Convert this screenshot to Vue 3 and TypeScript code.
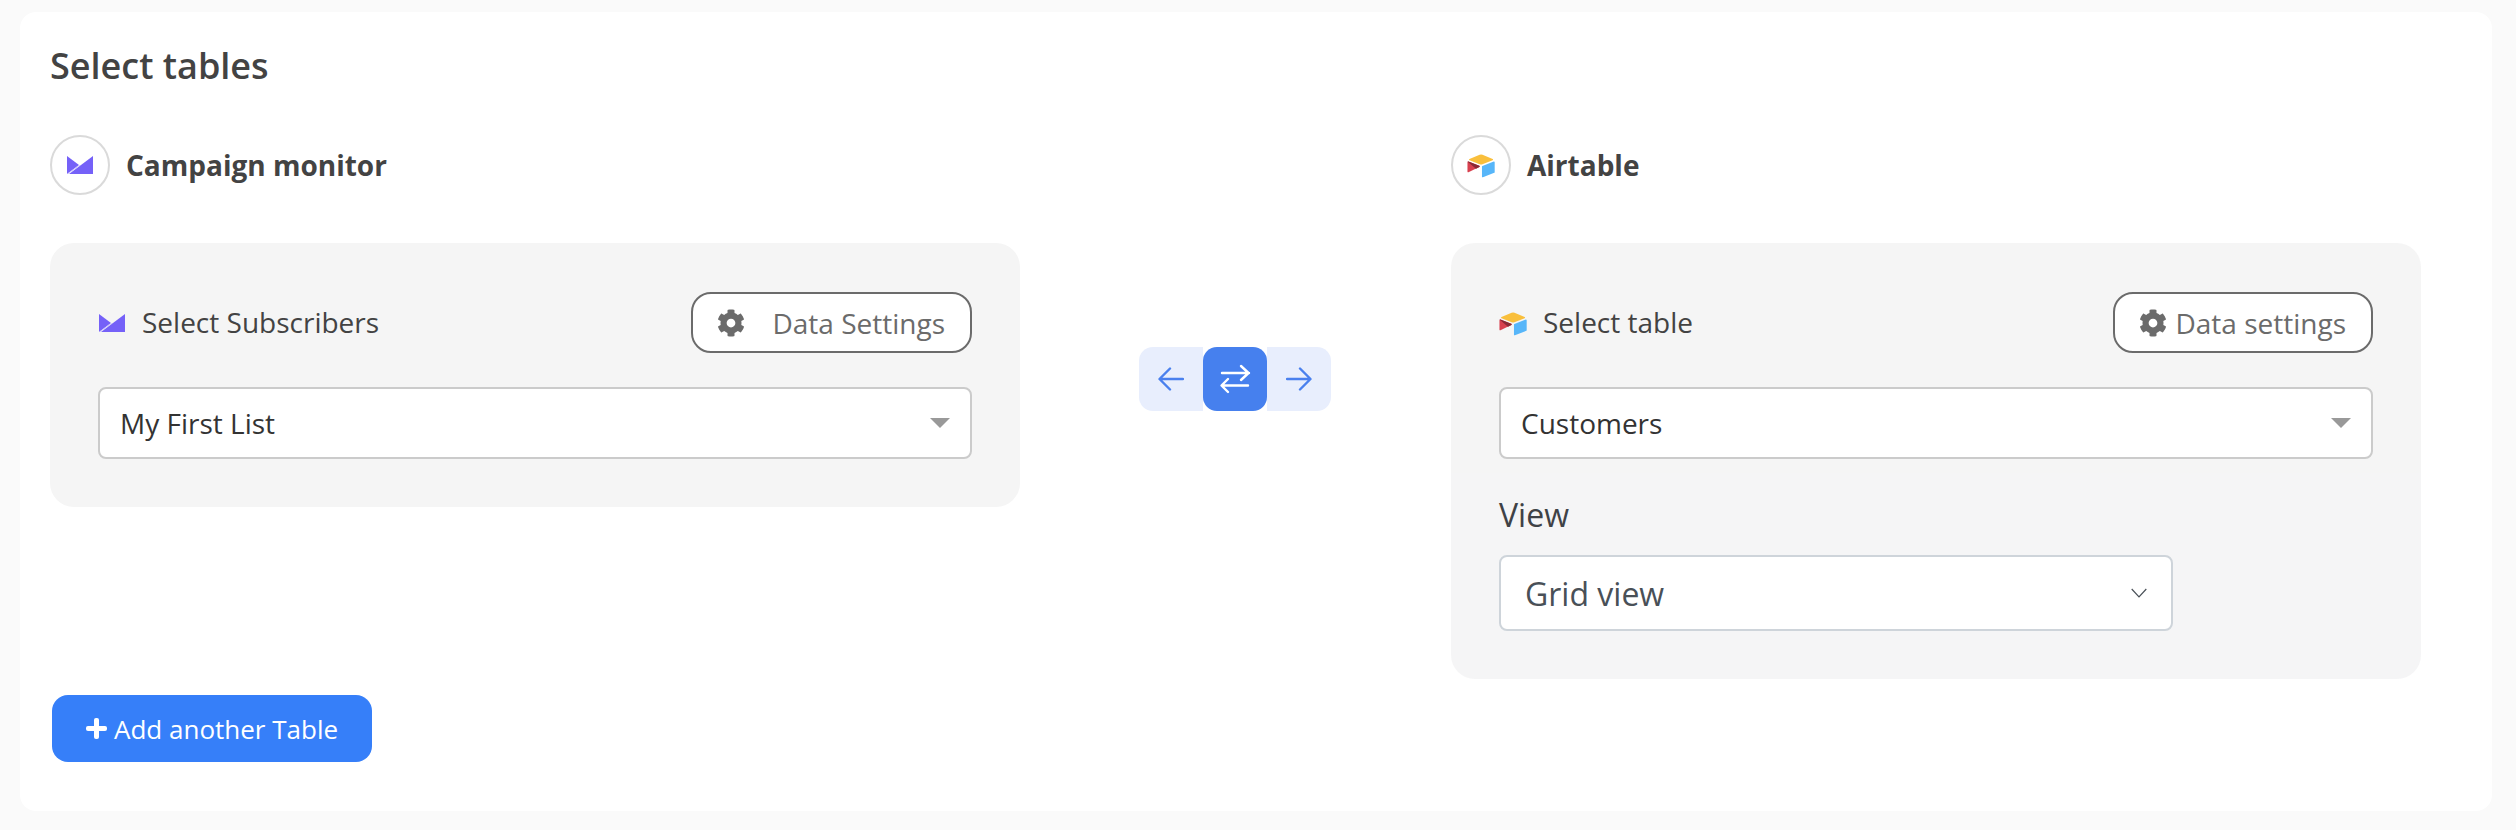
<script setup lang="ts">
const gear = "M487.4 315.7l-42.6-24.6c4.3-23.2 4.3-47 0-70.2l42.6-24.6c4.9-2.8 7.1-8.6 5.5-14-11.1-35.6-30-67.8-54.7-94.6-3.8-4.1-10-5.1-14.8-2.3L380.8 110c-17.9-15.4-38.5-27.3-60.8-35.1V25.8c0-5.6-3.9-10.5-9.4-11.7-36.7-8.2-74.3-7.8-109.2 0-5.5 1.2-9.4 6.1-9.4 11.7V75c-22.2 7.9-42.8 19.8-60.8 35.1L88.7 85.5c-4.9-2.8-11-1.9-14.8 2.3-24.7 26.7-43.6 58.9-54.7 94.6-1.7 5.4.6 11.2 5.5 14L67.3 221c-4.3 23.2-4.3 47 0 70.2l-42.6 24.6c-4.9 2.8-7.1 8.6-5.5 14 11.1 35.6 30 67.8 54.7 94.6 3.8 4.1 10 5.1 14.8 2.3l42.6-24.6c17.9 15.4 38.5 27.3 60.8 35.1v49.2c0 5.6 3.9 10.5 9.4 11.7 36.7 8.2 74.3 7.8 109.2 0 5.5-1.2 9.4-6.1 9.4-11.7v-49.2c22.2-7.9 42.8-19.8 60.8-35.1l42.6 24.6c4.9 2.8 11 1.9 14.8-2.3 24.7-26.7 43.6-58.9 54.7-94.6 1.5-5.5-.7-11.3-5.6-14.1zM256 336c-44.1 0-80-35.9-80-80s35.9-80 80-80 80 35.9 80 80-35.9 80-80 80z";
</script>

<template>
  <div class="page">
    <section class="card">
      <h1 class="title">Select tables</h1>
      <div class="columns">
        <div class="col">
          <div class="app-head">
            <span class="circle">
              <svg class="cm" viewBox="0 0 26 18"><path d="M0 0 12 9 0 18Z" fill="#7561f8" /><path d="M26 0V18H2L15 8.200Z" fill="#7561f8" /><path d="M0 18 12 9l1 .6L1 18Z" fill="#c9c0fc" /></svg>
            </span>
            <span class="app-name">Campaign monitor</span>
          </div>
          <div class="panel">
            <div class="row">
              <div class="label">
                <svg class="cm cm-small" viewBox="0 0 26 18"><path d="M0 0 12 9 0 18Z" fill="#7561f8" /><path d="M26 0V18H2L15 8.200Z" fill="#7561f8" /><path d="M0 18 12 9l1 .6L1 18Z" fill="#c9c0fc" /></svg>
                <span>Select Subscribers</span>
              </div>
              <button class="outline wide">
                <svg class="gear" viewBox="0 0 512 512"><path :d="gear" fill="#6b6b6b" /></svg>
                <span>Data Settings</span>
              </button>
            </div>
            <div class="select">
              <span>My First List</span>
              <i class="caret"></i>
            </div>
          </div>
        </div>

        <div class="middle">
          <div class="switch">
            <span class="seg">
              <svg viewBox="0 0 26 26" width="26" height="26"><path d="M25 13H2M12 2.500 1.500 13 12 23.500" fill="none" stroke="#4a80ee" stroke-width="2.400" stroke-linecap="round" stroke-linejoin="round" /></svg>
            </span>
            <span class="seg active">
              <svg viewBox="0 0 32 32" width="32" height="32"><path d="M3 10H30M22 3l7.500 7-7.500 7M29 22.500H3M9 16l-6.500 6.500L9 29" fill="none" stroke="#fff" stroke-width="2.400" stroke-linecap="round" stroke-linejoin="round" /></svg>
            </span>
            <span class="seg">
              <svg viewBox="0 0 26 26" width="26" height="26"><path d="M1 13H24M14 2.500 24.500 13 14 23.500" fill="none" stroke="#4a80ee" stroke-width="2.400" stroke-linecap="round" stroke-linejoin="round" /></svg>
            </span>
          </div>
        </div>

        <div class="col">
          <div class="app-head">
            <span class="circle">
              <svg class="at" viewBox="8 8 182 154">
                <path d="M90.039 12.368 24.079 39.66c-3.667 1.519-3.63 6.729.062 8.192l66.235 26.266a24.575 24.575 0 0 0 18.12 0l66.236-26.266c3.69-1.463 3.729-6.673.062-8.192l-65.96-27.292a24.578 24.578 0 0 0-18.795 0" fill="#f9bf3c" />
                <path d="M105.312 88.46v65.617c0 3.12 3.147 5.258 6.048 4.108l73.806-28.648a4.418 4.418 0 0 0 2.79-4.108V59.813c0-3.121-3.147-5.258-6.048-4.108l-73.806 28.648a4.42 4.42 0 0 0-2.79 4.108" fill="#57b6f9" />
                <path d="M88.078 91.846l-21.904 10.576-2.224 1.075-46.238 22.155c-2.93 1.414-6.672-.722-6.672-3.978V60.088c0-1.178.604-2.195 1.414-2.96a5.024 5.024 0 0 1 1.12-.84c1.104-.663 2.68-.84 4.02-.31L87.71 83.76c3.564 1.414 3.844 6.408.368 8.087" fill="#d8404e" />
                <path d="M88.078 91.846l-21.904 10.576-53.72-45.295a5.024 5.024 0 0 1 1.12-.84c1.104-.663 2.68-.84 4.02-.31L87.71 83.76c3.564 1.414 3.844 6.408.368 8.087" fill="#8a2a35" />
              </svg>
            </span>
            <span class="app-name">Airtable</span>
          </div>
          <div class="panel panel-tinted">
            <div class="row">
              <div class="label">
                <svg class="at at-small" viewBox="8 8 182 154">
                  <path d="M90.039 12.368 24.079 39.66c-3.667 1.519-3.63 6.729.062 8.192l66.235 26.266a24.575 24.575 0 0 0 18.12 0l66.236-26.266c3.69-1.463 3.729-6.673.062-8.192l-65.96-27.292a24.578 24.578 0 0 0-18.795 0" fill="#f9bf3c" />
                  <path d="M105.312 88.46v65.617c0 3.12 3.147 5.258 6.048 4.108l73.806-28.648a4.418 4.418 0 0 0 2.79-4.108V59.813c0-3.121-3.147-5.258-6.048-4.108l-73.806 28.648a4.42 4.42 0 0 0-2.79 4.108" fill="#57b6f9" />
                  <path d="M88.078 91.846l-21.904 10.576-2.224 1.075-46.238 22.155c-2.93 1.414-6.672-.722-6.672-3.978V60.088c0-1.178.604-2.195 1.414-2.96a5.024 5.024 0 0 1 1.12-.84c1.104-.663 2.68-.84 4.02-.31L87.71 83.76c3.564 1.414 3.844 6.408.368 8.087" fill="#d8404e" />
                  <path d="M88.078 91.846l-21.904 10.576-53.72-45.295a5.024 5.024 0 0 1 1.12-.84c1.104-.663 2.68-.84 4.02-.31L87.71 83.76c3.564 1.414 3.844 6.408.368 8.087" fill="#8a2a35" />
                </svg>
                <span>Select table</span>
              </div>
              <button class="outline">
                <svg class="gear" viewBox="0 0 512 512"><path :d="gear" fill="#6b6b6b" /></svg>
                <span>Data settings</span>
              </button>
            </div>
            <div class="select">
              <span>Customers</span>
              <i class="caret"></i>
            </div>
            <div class="view-label">View</div>
            <div class="view-select">
              <span>Grid view</span>
              <svg viewBox="0 0 16 10" width="16" height="10"><path d="M.7 1 8 8.800 15.300 1" fill="none" stroke="#495057" stroke-width="1.200" /></svg>
            </div>
          </div>
        </div>
      </div>
      <button class="add"><span class="plus"></span><span>Add another Table</span></button>
    </section>
  </div>
</template>

<style>
html, body { margin: 0; background: #fafafa; }
</style>

<style scoped>
.page {
  padding: 12px 24px 21px 20px;
  background: #fafafa;
  font-family: "Open Sans", "Liberation Sans", sans-serif;
}
.card {
  background: #fff;
  border-radius: 16px;
  padding: 32px 71px 49px 30px;
}
.title {
  margin: 0 0 47px;
  font-size: 36px;
  line-height: 44px;
  font-weight: 600;
  color: #434343;
}
.columns { display: flex; align-items: flex-start; }
.col { width: 970px; flex: none; }
.middle { flex: 1; display: flex; justify-content: center; padding: 212px 1px 0 0; }
.app-head { display: flex; align-items: center; height: 60px; margin-bottom: 48px; }
.circle {
  width: 60px; height: 60px; box-sizing: border-box;
  border: 2px solid #dadada; border-radius: 50%;
  display: flex; align-items: center; justify-content: center;
  margin-right: 16px;
}
.app-name { font-size: 28px; font-weight: 700; color: #434343; }
.cm { width: 26px; height: 18px; }
.at { width: 28px; height: 24px; margin-top: 2px; }
.panel {
  background: #f5f5f5;
  border-radius: 24px;
  padding: 49px 48px 48px;
}
.panel-tinted { background: linear-gradient(#f5f5f5 230px, #f5f5f6 230px); }
.row { display: flex; align-items: center; justify-content: space-between; margin-bottom: 34px; }
.label { display: flex; align-items: center; font-size: 28px; line-height: 36px; color: #434343; margin-top: -2px; }
.cm-small { margin: 2px 17px 0 1px; }
.at-small { margin: 4px 16px 0 0; }
.outline {
  display: flex; align-items: center;
  height: 61px; box-sizing: border-box;
  padding: 0 25px;
  background: #fff;
  border: 2px solid #6b6b6b;
  border-radius: 20px;
  font: inherit; font-size: 28px; color: #6b6b6b;
}
.gear { width: 28px; height: 28px; margin: 0 8px 0 -1px; }
.wide .gear { margin-right: 27px; }
.select {
  height: 72px; box-sizing: border-box;
  display: flex; align-items: center; justify-content: space-between;
  padding: 0 20px 0 20px;
  background: #fff;
  border: 2px solid #cbcbcb;
  border-radius: 8px;
  font-size: 28px; color: #333;
}
.caret {
  width: 0; height: 0;
  border-left: 10px solid transparent;
  border-right: 10px solid transparent;
  border-top: 10px solid #999;
}
.view-label {
  margin: 34px 0 0;
  height: 62px;
  font-size: 32px; line-height: 44px; color: #3f4246;
}
.view-select {
  width: 674px; height: 76px; box-sizing: border-box;
  display: flex; align-items: center; justify-content: space-between;
  padding: 0 24px 0 24px;
  background: #fff;
  border: 2px solid #ced4da;
  border-radius: 8px;
  font-size: 32px; color: #495057;
}
.switch { display: flex; }
.seg {
  width: 64px; height: 64px;
  display: flex; align-items: center; justify-content: center;
  background: #e8eefd;
}
.seg:first-child { border-radius: 14px 0 0 14px; }
.seg:last-child { border-radius: 0 14px 14px 0; }
.seg.active { background: #4680ee; border-radius: 14px; }
.add {
  display: flex; align-items: center;
  margin: 16px 0 0 2px;
  width: 320px; height: 67px; box-sizing: border-box;
  padding: 0 0 0 34px;
  background: #367ff9;
  border: 0; border-radius: 16px;
  font: inherit; font-size: 26px; color: #fff;
}
.plus { position: relative; width: 21px; height: 21px; margin-right: 7px; }
.plus::before, .plus::after { content: ""; position: absolute; background: #fff; border-radius: 2px; }
.plus::before { left: 0; right: 0; top: 8px; height: 5px; }
.plus::after { top: 0; bottom: 0; left: 8px; width: 5px; }
</style>
